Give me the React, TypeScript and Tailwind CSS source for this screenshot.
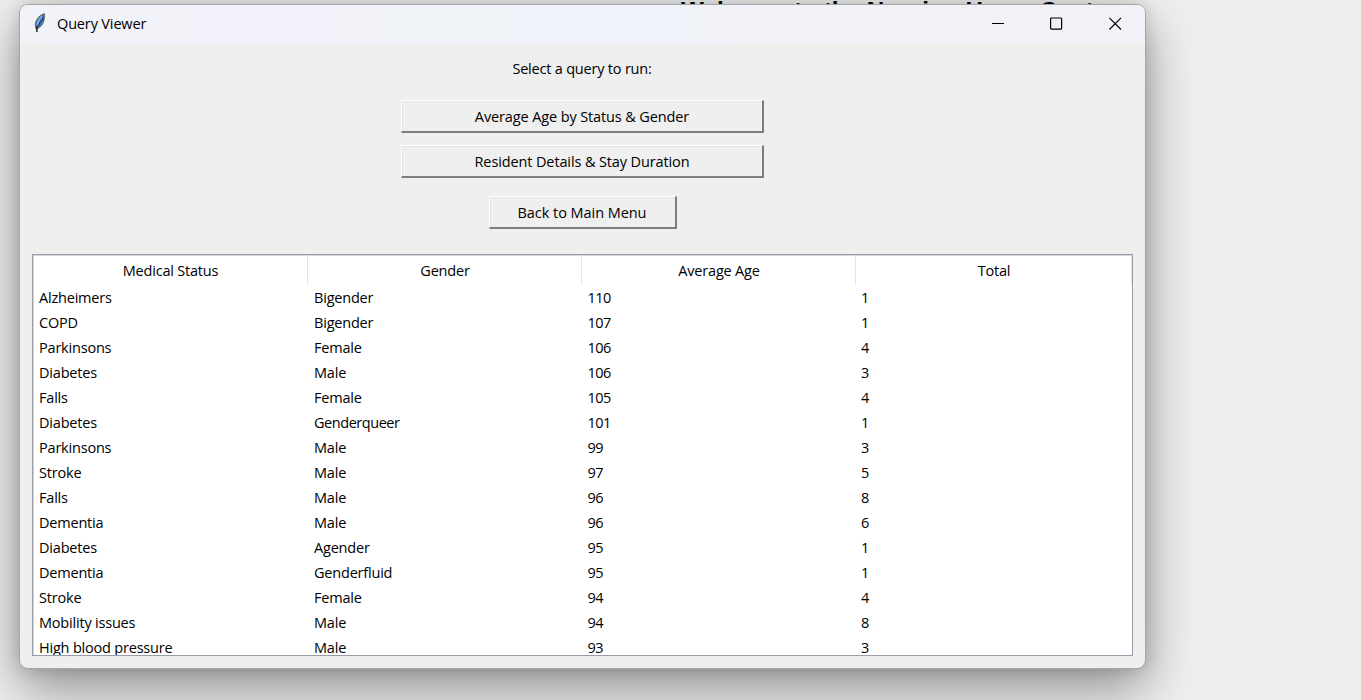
const columns = [
  { title: "Medical Status", cls: "w-[275px]" },
  { title: "Gender", cls: "w-[274px]" },
  { title: "Average Age", cls: "w-[274px]" },
  { title: "Total", cls: "w-[276px]" },
];

const rows: string[][] = [
  ["Alzheimers", "Bigender", "110", "1"],
  ["COPD", "Bigender", "107", "1"],
  ["Parkinsons", "Female", "106", "4"],
  ["Diabetes", "Male", "106", "3"],
  ["Falls", "Female", "105", "4"],
  ["Diabetes", "Genderqueer", "101", "1"],
  ["Parkinsons", "Male", "99", "3"],
  ["Stroke", "Male", "97", "5"],
  ["Falls", "Male", "96", "8"],
  ["Dementia", "Male", "96", "6"],
  ["Diabetes", "Agender", "95", "1"],
  ["Dementia", "Genderfluid", "95", "1"],
  ["Stroke", "Female", "94", "4"],
  ["Mobility issues", "Male", "94", "8"],
  ["High blood pressure", "Male", "93", "3"],
];

function Feather() {
  return (
    <svg width="14" height="20" viewBox="0 0 14 20" className="-mt-0.5">
      <path d="M11.200.8C7.800 1.600 4 5.400 2.800 9.200c-.6 2.100-.6 4.300.2 6.200l1.200.2c3.400-1.800 6.200-5.400 6.900-9.200.4-2.200.6-4.200.1-5.600Z" fill="#3f7cc4" stroke="#66696f" strokeWidth="1.200" />
      <path d="M8.600 3.200C6.500 5.500 4.800 8.500 4.200 12" stroke="#7db4ea" strokeWidth="1.600" fill="none" />
      <path d="M10.600 4.500C8.600 8 5.500 11.500 4.300 14.500" stroke="#16243a" strokeWidth="1" fill="none" />
      <path d="M3.900 13.500V19" stroke="#222" strokeWidth="1.500" fill="none" />
    </svg>
  );
}

function RaisedButton({ label, size }: { label: string; size: string }) {
  return (
    <button className={`${size} h-[33px] border-t border-l border-t-white border-l-white border-r-2 border-b-2 border-r-[#7d7d7d] border-b-[#7d7d7d] bg-[#efefef] pt-0.5 leading-none shadow-[inset_1px_1px_0_#e3e3e3]`}>
      {label}
    </button>
  );
}

export default function App() {
  return (
    <div className="relative h-[700px] w-[1361px] overflow-hidden bg-[#efefef] pl-[19px] pt-1 font-['Open_Sans','Noto_Sans',sans-serif] text-[14.5px] tracking-[-0.2px] text-black">
      <div className="absolute left-[681px] top-[-4px] whitespace-nowrap font-['Liberation_Sans',sans-serif] text-[24.3px] font-bold leading-[30px] tracking-normal text-black">
        Welcome to the Nursing Home Center
      </div>
      <main className="relative flex h-[665px] w-[1127px] flex-col rounded-[9px] border border-[#a6a6a6] bg-[#efefef] shadow-[0_20px_52px_rgba(0,0,0,0.4),0_0_16px_rgba(0,0,0,0.14)]">
        <header className="flex h-[38px] shrink-0 items-center rounded-t-[8px] bg-[linear-gradient(90deg,#f2f2f9,#f0f3f9_58%,#f2f1f8_68%)] pl-[13px]">
          <Feather />
          <h1 className="ml-2.5 tracking-[-0.15px]">Query Viewer</h1>
          <div className="mb-px ml-auto mr-[23px] flex items-center gap-[46px]">
            <svg width="12" height="13" viewBox="0 0 12 13"><path d="M0 6.500h12" stroke="#000" /></svg>
            <svg width="13" height="13" viewBox="0 0 13 13"><rect x=".6" y="1" width="11" height="11.200" rx="1" fill="none" stroke="#000" strokeWidth="1.200" /></svg>
            <svg width="13" height="13" viewBox="0 0 13 13"><path d="m.4.9 11.600 11.600m0-11.600L.4 12.500" stroke="#000" strokeWidth="1.150" /></svg>
          </div>
        </header>
        <section className="flex flex-col items-center">
          <p className="mt-4 h-5 pr-px leading-5">Select a query to run:</p>
          <div className="mt-[21px] flex flex-col items-center gap-3 tracking-[-0.12px]">
            <RaisedButton label="Average Age by Status & Gender" size="w-[363px]" />
            <RaisedButton label="Resident Details & Stay Duration" size="w-[363px]" />
          </div>
          <div className="mt-[18px] tracking-[-0.05px]">
            <RaisedButton label="Back to Main Menu" size="w-[188px]" />
          </div>
        </section>
        <section className="ml-3 mt-[25px] h-[402px] w-[1101px] overflow-hidden border border-[#9a9da8] bg-white shadow-[inset_1px_1px_0_#d5d6db]">
          <div className="flex h-[30px]">
            {columns.map((c) => (
              <div key={c.title} className={`${c.cls} shrink-0 border-r border-[#e5e5e5] pl-px text-center leading-[31px]`}>{c.title}</div>
            ))}
          </div>
          {rows.map((r, i) => (
            <div key={i} className="flex h-[25px] leading-[25px]">
              {r.map((cell, j) => (
                <div key={j} className={`${columns[j].cls} shrink-0 ${j < 2 ? "pl-1.5" : j === 2 ? "pl-[5.5px] tracking-[-0.6px]" : "pl-[5px]"} ${cell === "Genderqueer" ? "tracking-[-0.45px]" : ""}`}>{cell}</div>
              ))}
            </div>
          ))}
        </section>
      </main>
    </div>
  );
}
